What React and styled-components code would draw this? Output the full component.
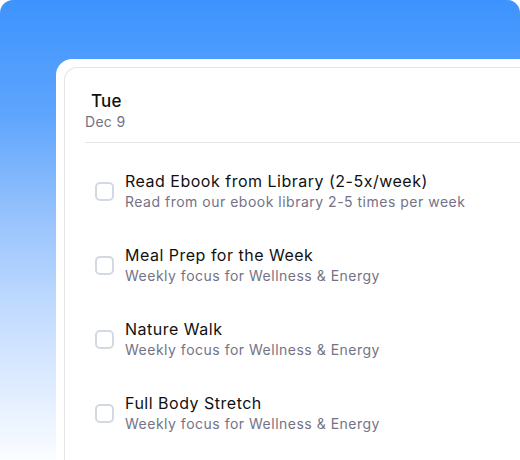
import React from "react";
import styled, { createGlobalStyle } from "styled-components";

const GlobalStyle = createGlobalStyle`
  html, body {
    margin: 0;
    padding: 0;
    background: #ffffff;
  }
  body {
    font-family: Inter, "Noto Sans", sans-serif;
    -webkit-font-smoothing: antialiased;
  }
`;

const Stage = styled.div`
  box-sizing: border-box;
  width: 520px;
  height: 460px;
  overflow: hidden;
  padding: 59px 0 0 56px;
  border-radius: 13px 13px 0 0;
  background: linear-gradient(
    180deg,
    #3d93fd 0%,
    #5ea5fd 25%,
    #92c0fc 45%,
    #c3dcff 68%,
    #e4efff 87%,
    #fbfdff 100%
  );
`;

const Frame = styled.div`
  box-sizing: border-box;
  width: 520px;
  height: 420px;
  padding: 8px 0 0 8px;
  background: #ffffff;
  border-radius: 16px 0 0 0;
`;

const Panel = styled.div`
  box-sizing: border-box;
  height: 100%;
  padding: 0 0 0 20px;
  border: 1.5px solid #e5e5e7;
  border-right: none;
  border-bottom: none;
  border-radius: 13px 0 0 0;
`;

const Header = styled.div`
  padding: 22px 0 10px;
  border-bottom: 1.5px solid #e6e6e8;
`;

const Weekday = styled.div`
  padding-left: 6px;
  font-size: 17px;
  line-height: 22px;
  font-weight: 500;
  letter-spacing: 0.2px;
  color: #111111;
`;

const DateLabel = styled.div`
  font-size: 14px;
  line-height: 20px;
  letter-spacing: 0.3px;
  color: #737385;
`;

const TaskList = styled.ul`
  list-style: none;
  margin: 0;
  padding: 27px 0 0 10px;
  display: flex;
  flex-direction: column;
  gap: 32px;
`;

const Task = styled.li`
  display: flex;
  align-items: center;
  gap: 11px;
`;

const Checkbox = styled.span`
  box-sizing: border-box;
  flex: none;
  width: 19px;
  height: 19px;
  border: 2px solid #d3d9e2;
  border-radius: 5px;
  background: #ffffff;
`;

const TaskText = styled.div`
  display: flex;
  flex-direction: column;
`;

const TaskTitle = styled.div`
  font-size: 16px;
  line-height: 22px;
  letter-spacing: 0.5px;
  color: #111111;
  white-space: nowrap;
`;

const TaskNote = styled.div`
  font-size: 14px;
  line-height: 20px;
  letter-spacing: 0.5px;
  color: #737385;
  white-space: nowrap;
`;

const tasks = [
  {
    title: "Read Ebook from Library (2-5x/week)",
    note: "Read from our ebook library 2-5 times per week",
  },
  { title: "Meal Prep for the Week", note: "Weekly focus for Wellness & Energy" },
  { title: "Nature Walk", note: "Weekly focus for Wellness & Energy" },
  { title: "Full Body Stretch", note: "Weekly focus for Wellness & Energy" },
];

export default function App() {
  return (
    <>
      <GlobalStyle />
      <Stage>
        <Frame>
          <Panel>
            <Header>
              <Weekday>Tue</Weekday>
              <DateLabel>Dec 9</DateLabel>
            </Header>
            <TaskList>
              {tasks.map((t) => (
                <Task key={t.title}>
                  <Checkbox />
                  <TaskText>
                    <TaskTitle>{t.title}</TaskTitle>
                    <TaskNote>{t.note}</TaskNote>
                  </TaskText>
                </Task>
              ))}
            </TaskList>
          </Panel>
        </Frame>
      </Stage>
    </>
  );
}
